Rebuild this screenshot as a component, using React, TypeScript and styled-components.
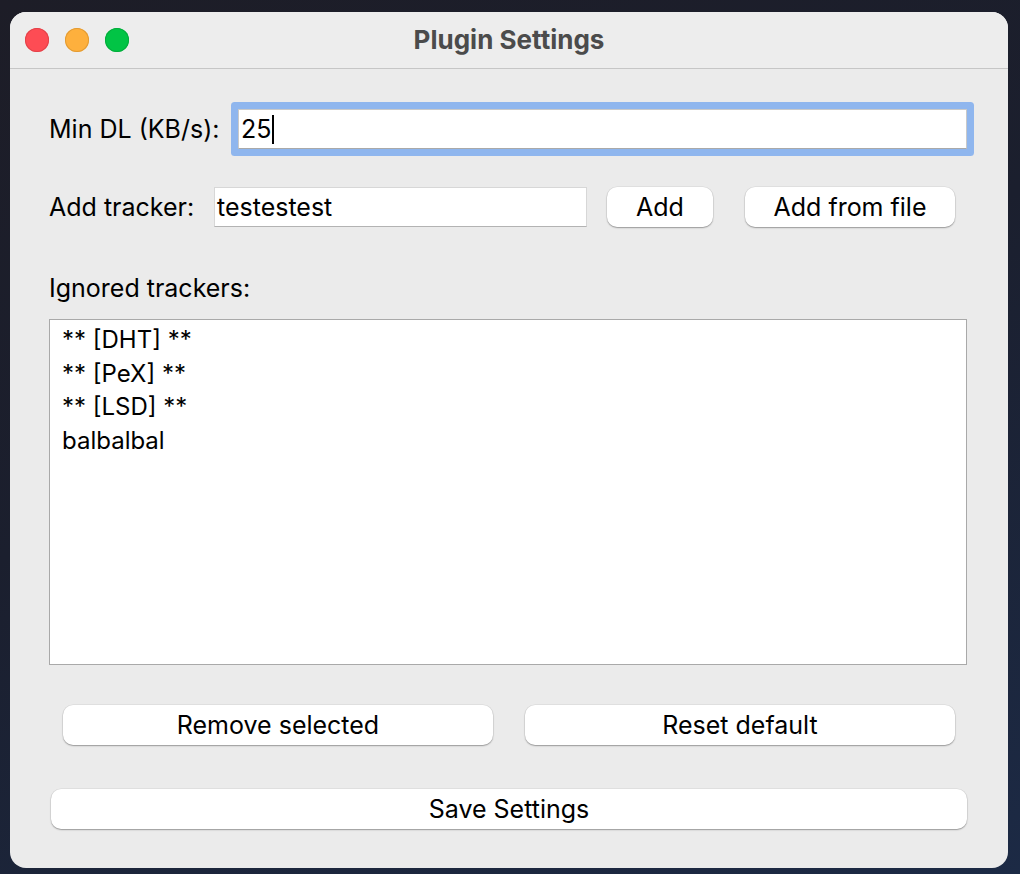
import React from 'react'
import styled, { createGlobalStyle } from 'styled-components'

const GlobalStyle = createGlobalStyle`
  html, body {
    margin: 0;
    padding: 0;
  }
  body {
    width: 1020px;
    height: 874px;
    overflow: hidden;
    background: linear-gradient(160deg, #1d1d27 0%, #1b1f2e 45%, #1c2a45 100%);
    font-family: Inter, "Liberation Sans", Arial, sans-serif;
    color: #000;
  }
`

const Desktop = styled.div`
  padding: 12px 12px 6px 10px;
`

const Window = styled.div`
  width: 998px;
  height: 856px;
  background: #ebebeb;
  border-radius: 16px;
  overflow: hidden;
  display: flex;
  flex-direction: column;
`

const TitleBar = styled.div`
  height: 56px;
  flex-shrink: 0;
  background: #ededed;
  border-bottom: 1px solid #c6c6c6;
  display: flex;
  align-items: center;
  padding-left: 15px;
  position: relative;
`

const Lights = styled.div`
  display: flex;
  gap: 16px;
`

const Light = styled.span<{ $color: string; $edge: string }>`
  width: 24px;
  height: 24px;
  border-radius: 50%;
  background: ${(p) => p.$color};
  box-shadow: inset 0 0 0 1px ${(p) => p.$edge};
`

const Title = styled.div`
  position: absolute;
  inset: 0 0 2px 0;
  display: flex;
  align-items: center;
  justify-content: center;
  font-size: 26px;
  font-weight: 700;
  color: #4b4b4b;
  pointer-events: none;
`

const Content = styled.div`
  padding: 0 41px 0 39px;
  display: flex;
  flex-direction: column;
  font-size: 25px;
`

const Row = styled.div<{ $top: number }>`
  display: flex;
  align-items: center;
  height: 40px;
  margin-top: ${(p) => p.$top}px;
`

const Label = styled.span<{ $width: number }>`
  white-space: nowrap;
  width: ${(p) => p.$width}px;
  flex-shrink: 0;
`

const FocusedInput = styled.div`
  flex: 1;
  height: 40px;
  box-sizing: border-box;
  background: #fff;
  border: 1px solid #c9c9c9;
  border-bottom-color: #a9a9a9;
  box-shadow: 0 0 0 7px #8fb6ee;
  border-radius: 1px;
  display: flex;
  align-items: center;
  padding-left: 2px;
`

const Caret = styled.span`
  display: inline-block;
  width: 2px;
  height: 29px;
  background: #000;
  margin-left: 1px;
`

const TextInput = styled.div`
  width: 373px;
  height: 40px;
  flex-shrink: 0;
  box-sizing: border-box;
  background: #fff;
  border: 1px solid #d7d7d7;
  border-bottom-color: #b3b3b3;
  display: flex;
  align-items: center;
  padding-left: 2px;
`

const Button = styled.div<{ $width?: number; $offset?: number }>`
  height: 40px;
  box-sizing: border-box;
  ${(p) => (p.$width ? `width: ${p.$width}px; flex-shrink: 0;` : 'flex: 1;')}
  margin-left: ${(p) => p.$offset ?? 0}px;
  background: #fff;
  border-radius: 10px;
  box-shadow: 0 1px 1.5px rgba(0, 0, 0, 0.32), 0 0 0 0.5px rgba(0, 0, 0, 0.08);
  display: flex;
  align-items: center;
  justify-content: center;
  white-space: nowrap;
`

const SectionLabel = styled.div`
  margin-top: 46px;
  height: 30px;
  line-height: 30px;
`

const List = styled.div`
  margin-top: 16px;
  height: 346px;
  box-sizing: border-box;
  background: #fff;
  border: 1px solid #a9a9a9;
  padding: 3px 0 0 12px;
  font-size: 24px;
`

const ListItem = styled.div`
  height: 33.5px;
  line-height: 33.5px;
  white-space: nowrap;
`

const ButtonRow = styled.div<{ $top: number }>`
  display: flex;
  gap: 32px;
  height: 40px;
  margin-top: ${(p) => p.$top}px;
  padding: 0 12px 0 14px;
`

const SaveRow = styled.div`
  display: flex;
  margin-top: 44px;
  padding-left: 2px;
`

const trackers = ['** [DHT] **', '** [PeX] **', '** [LSD] **', 'balbalbal']

const App: React.FC = () => {
  return (
    <Desktop>
      <GlobalStyle />
      <Window>
        <TitleBar>
          <Lights>
            <Light $color="#fe4c54" $edge="#e2434a" />
            <Light $color="#feb03d" $edge="#e29b34" />
            <Light $color="#01c445" $edge="#04ac3c" />
          </Lights>
          <Title>Plugin Settings</Title>
        </TitleBar>
        <Content>
          <Row $top={40}>
            <Label $width={189}>Min DL (KB/s):</Label>
            <FocusedInput>
              25
              <Caret />
            </FocusedInput>
          </Row>
          <Row $top={38}>
            <Label $width={165}>Add tracker:</Label>
            <TextInput>testestest</TextInput>
            <Button $width={106} $offset={20}>
              Add
            </Button>
            <Button $width={210} $offset={32}>
              Add from file
            </Button>
          </Row>
          <SectionLabel>Ignored trackers:</SectionLabel>
          <List>
            {trackers.map((t) => (
              <ListItem key={t}>{t}</ListItem>
            ))}
          </List>
          <ButtonRow $top={40}>
            <Button>Remove selected</Button>
            <Button>Reset default</Button>
          </ButtonRow>
          <SaveRow>
            <Button>Save Settings</Button>
          </SaveRow>
        </Content>
      </Window>
    </Desktop>
  )
}

export default App
